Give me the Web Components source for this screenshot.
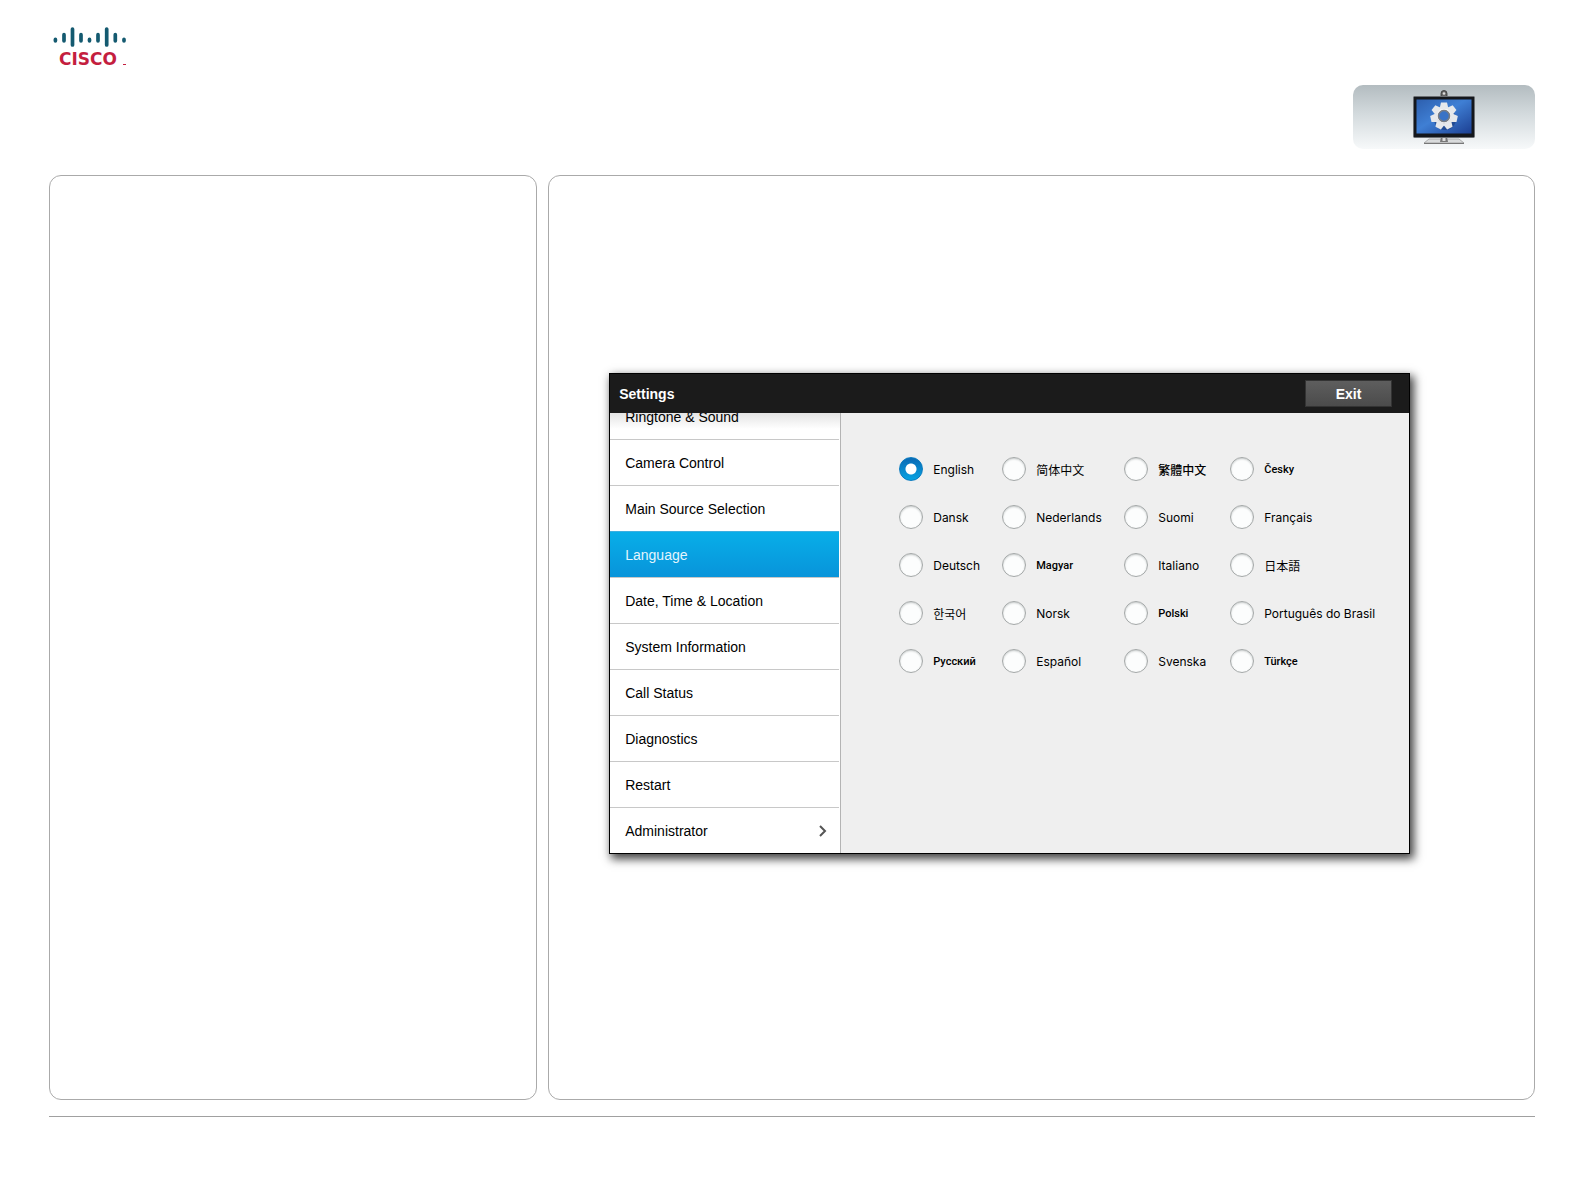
<!DOCTYPE html>
<html lang="en">
<head>
<meta charset="utf-8">
<meta name="viewport" content="width=device-width, initial-scale=1">
<title>Settings</title>
<style>
    body {
        margin: 0;
        background: #fff;
        color: #000;
        font-family: "Liberation Sans", "Noto Sans CJK SC", sans-serif;
    }
</style>
</head>
<body>

<template id="guidePage">
    <style>
        :host {
            display: flex;
            flex-direction: column;
            box-sizing: border-box;
            min-height: 100vh;
            padding: 24px 49px 0;
        }

        header {
            display: flex;
            justify-content: space-between;
            height: 151px;
        }

        .tab {
            padding-top: 61px;
        }

        main {
            flex: 1;
            display: grid;
            grid-template-columns: 331fr 669fr;
            gap: 11px;
        }

        footer {
            height: 74px;
            margin-top: 16px;
            border-top: 1px solid #a0a0a0;
        }
    </style>
    <header>
        <slot name="logo"></slot>
        <div class="tab"><slot name="tab"></slot></div>
    </header>
    <main><slot></slot></main>
    <footer></footer>
</template>

<template id="brandLogo">
    <style>
        :host {
            display: block;
        }

        svg {
            display: block;
        }

        text {
            font: bold 17px "DejaVu Sans", sans-serif;
            fill: #c41e3f;
        }
    </style>
    <svg width="82" height="48" viewBox="0 0 82 48" role="img" aria-label="Cisco">
        <g stroke="#145a70" stroke-width="3.7" stroke-linecap="round">
            <path d="M6.4 15.4v1.4M15 10.7v6.1M23.5 5v16M32 10.7v6.1M40.5 15.4v1.4M49 10.7v6.1M57.7 5v16M66.3 10.7v6.1M75 15.4v1.4"/>
        </g>
        <text x="10" y="41">CISCO</text>
        <path d="M74 40.5h3" stroke="#c41e3f" stroke-width="1"/>
    </svg>
</template>

<template id="displayTab">
    <style>
        :host {
            display: block;
        }

        button {
            display: flex;
            justify-content: center;
            width: 182px;
            height: 64px;
            padding: 4px 0 0;
            border: 0;
            border-radius: 10px;
            background: linear-gradient(#b3bcc0, #d3dadd 45%, #f7f9fa);
        }

        svg {
            display: block;
        }
    </style>
    <button type="button" aria-label="Display settings">
        <svg width="64" height="58" viewBox="0 0 64 58">
            <defs>
                <linearGradient id="screen" x1="0" y1="0" x2="1" y2="1">
                    <stop offset="0" stop-color="#2d5fae"/>
                    <stop offset=".45" stop-color="#3f7fd4"/>
                    <stop offset="1" stop-color="#1c3f92"/>
                </linearGradient>
                <linearGradient id="metal" x1="0" y1="0" x2="0" y2="1">
                    <stop offset="0" stop-color="#fff"/>
                    <stop offset="1" stop-color="#bfc3c9"/>
                </linearGradient>
            </defs>
            <path d="M29 8V4.500a3 3 0 0 1 6 0V8z" fill="#666" stroke="#333" stroke-width=".8"/>
            <circle cx="32" cy="4.500" r="1.300" fill="#ddd"/>
            <path d="M17 50h30l5 4H12z" fill="#d9dbdc" stroke="#888" stroke-width=".6"/>
            <path d="M12 54.500h40" stroke="#777"/>
            <path d="M29 48h6l1 5h-8z" fill="#777"/>
            <rect x="30.500" y="49" width="3" height="3" fill="#ddd"/>
            <rect x="1.500" y="7.500" width="61" height="41" rx="1" fill="#14171c" stroke="#6c7074"/>
            <rect x="4.500" y="10.500" width="55" height="34" fill="url(#screen)"/>
            <g transform="translate(32 27)">
                <circle cx="1" cy="3" r="11" fill="#14316d" opacity=".5"/>
                <g id="gear" fill="url(#metal)">
                    <circle r="9.500"/>
                </g>
                <circle r="5.600" fill="#3a73c6" stroke="#777d86" stroke-width="1.800"/>
                <circle r="6.800" fill="none" stroke="#f4f4f4" stroke-width=".8"/>
            </g>
        </svg>
    </button>
</template>

<template id="guidePanel">
    <style>
        :host {
            display: block;
            box-sizing: border-box;
            border: 1px solid #aaa;
            border-radius: 12px;
        }

        :host([roomy]) {
            padding: 197px 124px 60px 60px;
        }
    </style>
    <slot></slot>
</template>

<template id="settingsWindow">
    <style>
        :host {
            display: block;
            border: 1px solid #000;
            background: #efefef;
            box-shadow: 3px 4px 9px 1px rgba(0, 0, 0, .75);
        }

        header {
            display: flex;
            align-items: center;
            justify-content: space-between;
            height: 39px;
            box-sizing: border-box;
            padding: 0 17px 0 9px;
            background: #1b1b1b;
            color: #fff;
        }

        h1 {
            margin: 0;
            font-size: 14px;
            font-weight: bold;
        }

        button {
            width: 87px;
            height: 27px;
            padding: 0;
            border: 1px solid #333;
            background: linear-gradient(#5e5e5e, #4b4b4b);
            color: #fff;
            font: inherit;
            font-size: 14px;
            font-weight: bold;
        }

        .body {
            display: grid;
            grid-template-columns: 231px 1fr;
            height: 440px;
        }

        /* The list is scrolled to its end, so the first row is cut off */
        nav {
            display: flex;
            flex-direction: column;
            justify-content: flex-end;
            overflow: hidden;
            border-right: 1px solid #b4b4b4;
            background: linear-gradient(#e4e4e4, #fff 16px);
        }

        section {
            padding: 44px 0 0 58px;
        }
    </style>
    <header>
        <h1></h1>
        <button type="button">Exit</button>
    </header>
    <div class="body">
        <nav><slot name="menu"></slot></nav>
        <section><slot></slot></section>
    </div>
</template>

<template id="menuItem">
    <style>
        :host {
            display: block;
            flex: none;
        }

        a {
            display: flex;
            align-items: center;
            justify-content: space-between;
            box-sizing: border-box;
            height: 46px;
            margin-right: 1px;
            padding: 0 12px 0 15px;
            border-top: 1px solid #c8c8c8;
            color: inherit;
            font-size: 14px;
            text-decoration: none;
        }

        :host([selected]) a {
            border-color: #3dafe0;
            background: linear-gradient(#08aee8, #0894da);
            color: #e3f5fd;
        }

        svg {
            display: none;
        }

        :host([more]) svg {
            display: block;
        }
    </style>
    <a href="#">
        <slot></slot>
        <svg width="8" height="12" viewBox="0 0 8 12" fill="none" stroke="#555" stroke-width="2">
            <path d="M1 1l5 5-5 5"/>
        </svg>
    </a>
</template>

<template id="languagePicker">
    <style>
        :host {
            display: grid;
            grid-template-columns: 79px 98px 82px max-content;
            gap: 24px;
            font-family: Inter, "Noto Sans CJK SC", sans-serif;
        }

        label {
            display: flex;
            align-items: center;
            gap: 10px;
            height: 24px;
            font-size: 12px;
            white-space: nowrap;
        }

        label.compact {
            font-family: Roboto, "Noto Sans CJK TC", sans-serif;
            font-size: 11px;
            font-weight: 500;
        }

        label:lang(zh-Hant) {
            font-size: 12px;
        }

        input {
            appearance: none;
            flex: none;
            box-sizing: border-box;
            width: 24px;
            height: 24px;
            margin: 0;
            border: 1px solid #a4a8a8;
            border-radius: 50%;
            background: #fcfdfd;
            box-shadow: inset 0 1px 2px #c5c9c9;
        }

        input:checked {
            border-color: #0a7cc0;
            background: radial-gradient(circle, #fff 5px, transparent 6px), linear-gradient(#0a69b4, #06a3e2);
            box-shadow: none;
        }
    </style>
</template>

<guide-page>
    <brand-logo slot="logo"></brand-logo>
    <display-tab slot="tab"></display-tab>
    <guide-panel></guide-panel>
    <guide-panel roomy>
        <settings-window heading="Settings">
            <menu-item slot="menu">Ringtone &amp; Sound</menu-item>
            <menu-item slot="menu">Camera Control</menu-item>
            <menu-item slot="menu">Main Source Selection</menu-item>
            <menu-item slot="menu" selected>Language</menu-item>
            <menu-item slot="menu">Date, Time &amp; Location</menu-item>
            <menu-item slot="menu">System Information</menu-item>
            <menu-item slot="menu">Call Status</menu-item>
            <menu-item slot="menu">Diagnostics</menu-item>
            <menu-item slot="menu">Restart</menu-item>
            <menu-item slot="menu" more>Administrator</menu-item>
            <language-picker value="en"></language-picker>
        </settings-window>
    </guide-panel>
</guide-page>

<script>
    (function guideComponents(customElements) {

        'use strict';

        // Base: clones the template into an open shadow root
        class TemplateElement extends HTMLElement {

            constructor(templateId) {
                super();
                const template = document.querySelector(templateId);
                this.attachShadow({ mode: 'open' });
                this.shadowRoot.appendChild(document.importNode(template.content, true));
            }

        }

        class GuidePage extends TemplateElement {
            constructor() { super('#guidePage'); }
        }

        class BrandLogo extends TemplateElement {
            constructor() { super('#brandLogo'); }
        }

        class GuidePanel extends TemplateElement {
            constructor() { super('#guidePanel'); }
        }

        class MenuItem extends TemplateElement {
            constructor() { super('#menuItem'); }
        }

        class DisplayTab extends TemplateElement {

            constructor() {
                super('#displayTab');
                this._drawTeeth(7);
            }

            // Teeth spread evenly round the gear
            _drawTeeth(count) {
                const gear = this.shadowRoot.querySelector('#gear');

                for (let i = 0; i < count; i++) {
                    const tooth = document.createElementNS('http://www.w3.org/2000/svg', 'path');
                    tooth.setAttribute('d', 'M-4.500-7l1.500-6.500h6L4.500-7z');
                    tooth.setAttribute('transform', `rotate(${i * 360 / count})`);
                    tooth.setAttribute('fill', '#e6e8eb');
                    gear.appendChild(tooth);
                }
            }

        }

        class SettingsWindow extends TemplateElement {

            constructor() {
                super('#settingsWindow');
            }

            connectedCallback() {
                this.shadowRoot.querySelector('h1').textContent = this.getAttribute('heading');
            }

        }

        class LanguagePicker extends TemplateElement {

            constructor() {
                super('#languagePicker');
            }

            static get languages() {
                return [
                    ['en', 'English'], ['zh-Hans', '简体中文'], ['zh-Hant', '繁體中文', true], ['cs', 'Česky', true],
                    ['da', 'Dansk'], ['nl', 'Nederlands'], ['fi', 'Suomi'], ['fr', 'Français'],
                    ['de', 'Deutsch'], ['hu', 'Magyar', true], ['it', 'Italiano'], ['ja', '日本語'],
                    ['ko', '한국어'], ['no', 'Norsk'], ['pl', 'Polski', true], ['pt-BR', 'Português do Brasil'],
                    ['ru', 'Русский', true], ['es', 'Español'], ['sv', 'Svenska'], ['tr', 'Türkçe', true]
                ];
            }

            connectedCallback() {
                LanguagePicker.languages.forEach(([code, name, compact]) => {
                    const label = document.createElement('label');
                    const input = document.createElement('input');

                    input.type = 'radio';
                    input.name = 'language';
                    input.value = code;
                    input.checked = code === this.getAttribute('value');

                    label.lang = code;
                    label.classList.toggle('compact', !!compact);
                    label.append(input, name);
                    this.shadowRoot.appendChild(label);
                });
            }

        }

        customElements.define('guide-page', GuidePage);
        customElements.define('brand-logo', BrandLogo);
        customElements.define('display-tab', DisplayTab);
        customElements.define('guide-panel', GuidePanel);
        customElements.define('settings-window', SettingsWindow);
        customElements.define('menu-item', MenuItem);
        customElements.define('language-picker', LanguagePicker);

    })(window.customElements);
</script>

</body>
</html>
